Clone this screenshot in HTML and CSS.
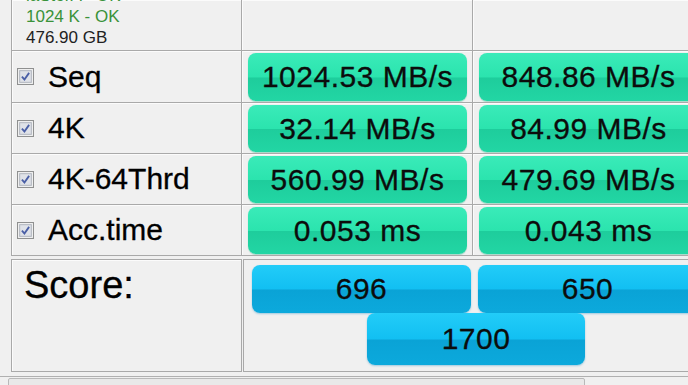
FILE: index.html
```html
<!DOCTYPE html>
<html>
<head>
<meta charset="utf-8">
<link rel="stylesheet" href="styles.css">
</head>
<body>
<div class="board">
  <div class="cell first head-left">
    <div class="drive">
      <div class="ok">iaStorA - OK</div>
      <div class="ok">1024 K - OK</div>
      <div class="size">476.90 GB</div>
    </div>
  </div>
  <div class="cell head"></div>
  <div class="cell head"></div>

  <div class="cell first label row1"><svg class="cb" viewBox="0 0 16 16"><rect x="0.5" y="0.5" width="15" height="15" fill="#f6f6f6" stroke="#8f9090"/><rect x="2.5" y="2.5" width="11" height="11" fill="#dfe2e8" stroke="#b3b8c0"/><path d="M4.6 8.2 L7 10.8 L11.4 4.6" fill="none" stroke="#4a5fa6" stroke-width="1.7"/></svg><span>Seq</span></div>
  <div class="cell val row1"><div class="bar green">1024.53 MB/s</div></div>
  <div class="cell val row1"><div class="bar green">848.86 MB/s</div></div>

  <div class="cell first label"><svg class="cb" viewBox="0 0 16 16"><rect x="0.5" y="0.5" width="15" height="15" fill="#f6f6f6" stroke="#8f9090"/><rect x="2.5" y="2.5" width="11" height="11" fill="#dfe2e8" stroke="#b3b8c0"/><path d="M4.6 8.2 L7 10.8 L11.4 4.6" fill="none" stroke="#4a5fa6" stroke-width="1.7"/></svg><span>4K</span></div>
  <div class="cell val"><div class="bar green">32.14 MB/s</div></div>
  <div class="cell val"><div class="bar green">84.99 MB/s</div></div>

  <div class="cell first label"><svg class="cb" viewBox="0 0 16 16"><rect x="0.5" y="0.5" width="15" height="15" fill="#f6f6f6" stroke="#8f9090"/><rect x="2.5" y="2.5" width="11" height="11" fill="#dfe2e8" stroke="#b3b8c0"/><path d="M4.6 8.2 L7 10.8 L11.4 4.6" fill="none" stroke="#4a5fa6" stroke-width="1.7"/></svg><span>4K-64Thrd</span></div>
  <div class="cell val"><div class="bar green">560.99 MB/s</div></div>
  <div class="cell val"><div class="bar green">479.69 MB/s</div></div>

  <div class="cell first label"><svg class="cb" viewBox="0 0 16 16"><rect x="0.5" y="0.5" width="15" height="15" fill="#f6f6f6" stroke="#8f9090"/><rect x="2.5" y="2.5" width="11" height="11" fill="#dfe2e8" stroke="#b3b8c0"/><path d="M4.6 8.2 L7 10.8 L11.4 4.6" fill="none" stroke="#4a5fa6" stroke-width="1.7"/></svg><span>Acc.time</span></div>
  <div class="cell val"><div class="bar green">0.053 ms</div></div>
  <div class="cell val"><div class="bar green">0.043 ms</div></div>
</div>

<div class="score">
  <div class="score-label">Score:</div>
  <div class="score-bars">
    <div class="bar blue">696</div>
    <div class="bar blue">650</div>
    <div class="bar blue total">1700</div>
  </div>
</div>

<div class="footer">
  <div class="progress"></div>
</div>
</body>
</html>
```

FILE: styles.css
```css
html, body {
  margin: 0;
  padding: 0;
  width: 688px;
  height: 385px;
  overflow: hidden;
  background: #f0f0f0;
  font-family: "Liberation Sans", Arial, sans-serif;
  color: #000;
}

.board {
  display: grid;
  grid-template-columns: 231px 231px 231px;
  grid-template-rows: 51px 52px 51px 51px 51px;
  margin-left: 11px;
  width: 693px;
}

.cell {
  box-sizing: border-box;
  border-right: 1px solid #a9a9a9;
  border-bottom: 1px solid #a9a9a9;
  box-shadow: inset 1px 1px 0 #fbfbfb;
  overflow: hidden;
}

.first {
  border-left: 1px solid #a9a9a9;
}

.head-left {
  padding-left: 14px;
}

.drive {
  margin-top: -15px;
  font-size: 17px;
  line-height: 21px;
}

.ok {
  color: #3a923a;
}

.size {
  color: #222;
}

.label {
  display: flex;
  align-items: center;
  padding-left: 5px;
  font-size: 30px;
  -webkit-text-stroke: 0.3px #000;
}

.cb {
  width: 17px;
  height: 17px;
  flex: none;
  margin-right: 14px;
}

.val {
  padding: 2px 5px 1px 6px;
  display: flex;
}

.bar {
  flex: 1;
  display: flex;
  align-items: center;
  justify-content: center;
  border-radius: 8px;
  font-size: 30px;
  letter-spacing: 0.5px;
  color: #0c0c0c;
  -webkit-text-stroke: 0.3px #0c0c0c;
}

.green {
  background: linear-gradient(#3aebb9 0%, #2be4ae 50%, #1ecd9c 52%, #22d6a4 100%);
  box-shadow: 0 1px 1px rgba(20, 170, 120, 0.35);
}

.blue {
  background: linear-gradient(#22ccf8 0%, #12bff2 50%, #0aa3d6 52%, #0ca9dc 100%);
  box-shadow: 0 1px 2px rgba(10, 130, 190, 0.35);
}

.score {
  display: grid;
  grid-template-columns: 231px 462px;
  margin-left: 11px;
  margin-top: 3px;
  height: 113px;
}

.score-label {
  box-sizing: border-box;
  border: 1px solid #a9a9a9;
  box-shadow: inset 1px 1px 0 #fbfbfb;
  padding: 6px 0 0 12px;
  font-size: 38px;
  line-height: 38px;
  -webkit-text-stroke: 0.3px #000;
}

.score-bars {
  box-sizing: border-box;
  border-top: 1px solid #a9a9a9;
  border-bottom: 1px solid #a9a9a9;
  margin-left: 1px;
  border-left: 1px solid #a9a9a9;
  padding: 5px 0 0 8px;
  display: grid;
  grid-template-columns: 219px 219px;
  grid-template-rows: 48px 52px;
  column-gap: 7px;
}

.total {
  grid-column: 1 / span 2;
  margin-left: 115px;
  width: 218px;
}

.footer {
  margin-top: 4px;
  border-top: 1px solid #b0b0b0;
  padding-top: 1px;
}

.progress {
  box-sizing: border-box;
  margin-left: 8px;
  width: 577px;
  height: 20px;
  border: 1px solid #b9b9b9;
  border-radius: 2px;
  background: #e9e9e9;
}
```
